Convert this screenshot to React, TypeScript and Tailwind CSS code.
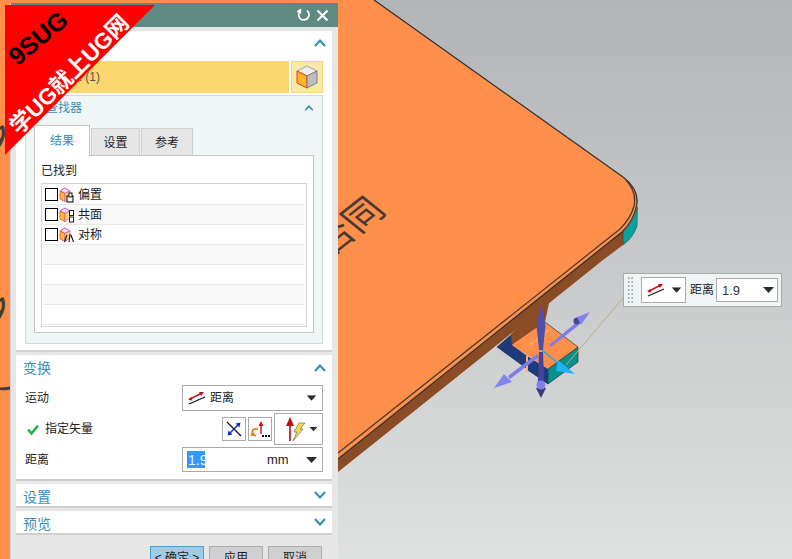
import React from "react";

const Chevron = ({ up = true, className = "" }: { up?: boolean; className?: string }) => (
  <svg width="12" height="8" viewBox="0 0 12 8" className={className}>
    <path d={up ? "M1 7 L6 1.5 L11 7" : "M1 1 L6 6.5 L11 1"} fill="none" stroke="#2f8cb8" strokeWidth="2" />
  </svg>
);

const Caret = ({ className = "" }: { className?: string }) => (
  <svg width="11" height="6" viewBox="0 0 11 6" className={className}>
    <path d="M0 0 H11 L5.5 6 Z" fill="#2b2b2b" />
  </svg>
);

const DistanceIcon = () => (
  <svg width="18" height="14" viewBox="0 0 18 14">
    <path d="M1 13 L17 6" stroke="#1a1a1a" strokeWidth="1.3" />
    <path d="M1 8.5 L13 2.5" stroke="#c8101a" strokeWidth="1.5" />
    <path d="M16 1 L11 1 L13 5 Z" fill="#c8101a" />
    <path d="M0.5 9 L4.5 9.5 L3 6 Z" fill="#c8101a" />
  </svg>
);

const Cube = () => (
  <svg width="22" height="24" viewBox="0 0 22 24">
    <path d="M11 1 L21 6 L11 11 L1 6 Z" fill="#eeeeee" stroke="#8d8d9a" strokeWidth="0.8" />
    <path d="M1 6 L11 11 V23 L1 18 Z" fill="#fdb52a" stroke="#e8361b" strokeWidth="1" />
    <path d="M11 11 L21 6 V18 L11 23 Z" fill="#bdbdbd" stroke="#6d6d6d" strokeWidth="0.8" />
  </svg>
);

const FaceIcon = ({ kind }: { kind: number }) => (
  <svg width="15" height="16" viewBox="0 0 15 16" className="ml-[1px] shrink-0">
    <path d="M1 4 L6 1 L11 4 L6 6.5 Z" fill="#f0dcf8" stroke="#b35bd6" strokeWidth="1" />
    <path d="M1 4 L6 6.5 V14.5 L1 12 Z" fill="#fdbb3a" stroke="#ec5a2a" strokeWidth="0.9" />
    <path d="M6 6.5 L11 4 V11 L6 14.5 Z" fill="#ffd76a" stroke="#c06ad8" strokeWidth="0.8" />
    {kind === 0 && (
      <>
        <rect x="8" y="9" width="6" height="6" fill="#fff" stroke="#111" strokeWidth="1.1" />
        <rect x="10" y="6" width="3" height="4" fill="#fff" stroke="#111" strokeWidth="1" />
      </>
    )}
    {kind === 1 && (
      <>
        <rect x="10.5" y="3.5" width="4" height="5" fill="#fff" stroke="#222" strokeWidth="1" />
        <rect x="10.5" y="10" width="4" height="5" fill="#fff" stroke="#222" strokeWidth="1" />
      </>
    )}
    {kind === 2 && (
      <path d="M5.5 15 L8 8 M10 15 L11 7 M14.5 15 L12 8" stroke="#111" strokeWidth="1.1" fill="none" />
    )}
  </svg>
);

const TabItem = ({ label, active, w }: { label: string; active?: boolean; w: string }) => (
  <div
    className={
      active
        ? `${w} h-[31px] bg-white border border-b-0 border-[#c4c4c4] text-[#3a8fb5] flex items-center justify-center relative z-10`
        : `${w} h-[28px] bg-[#e6e6e6] border border-b-0 border-[#d0d0d0] text-[#222] flex items-center justify-center`
    }
  >
    {label}
  </div>
);

const Row = ({ kind, label, alt }: { kind?: number; label?: string; alt?: boolean }) => (
  <div className={`h-[20px] border-b border-[#e8e8e8] flex items-center pl-[2px] ${alt ? "bg-[#f8f8f8]" : "bg-white"}`}>
    {label && (
      <>
        <div className="w-[13px] h-[13px] border-[1.5px] border-black bg-white shrink-0" />
        <FaceIcon kind={kind ?? 0} />
        <span className="ml-[4px] text-[#222]">{label}</span>
      </>
    )}
  </div>
);

const Collapsed = ({ label }: { label: string }) => (
  <div className="h-[24px] bg-white border-b-2 border-[#cfcfcf] flex items-center justify-between pl-[7px] pr-[6px]">
    <span className="text-[14px] text-[#3a8fb5] pt-[4px]">{label}</span>
    <Chevron up={false} />
  </div>
);

const Scene = () => (
  <svg viewBox="0 0 792 559" width="792" height="559" className="absolute inset-0">
    <path d="M0 740 L338 472 L603 260 L623 245 L623 225 L338 450 L0 700 Z" fill="#8a4b25" />
    <path d="M623 245 L623 232 Q634 222 637.5 207 L637 226 Q633 238 623 245 Z" fill="#05a3a0" stroke="#333" strokeWidth="0.5" />
    <path d="M374 0 L623 177 Q640 190 636.5 206 Q634 220 622 232 L338 459 L0 725 L0 0 Z" fill="#ff8f4a" />
    <path d="M374 0 L623 177 Q640 190 636.5 206 Q634 220 622 232 L338 459" fill="none" stroke="#333" strokeWidth="1.3" />
    <path d="M626 180 Q637 192 634 206 Q631 218 620 229 L338 453" fill="none" stroke="#4a3a32" strokeWidth="1.3" />

    <g fontFamily="'Noto Sans CJK SC', sans-serif" fill="#453a34" fontWeight="400">
      <text transform="matrix(0.8 -0.63 0.8 0.64 330 257)" fontSize="36">合同</text>
      <text transform="matrix(0.8 -0.63 0.8 0.64 -14 157)" fontSize="38">多</text>
      <text transform="matrix(0.8 -0.63 0.8 0.64 -14 329)" fontSize="38">多</text>
      <text transform="matrix(0.8 -0.63 0.8 0.64 -18 409)" fontSize="38">人</text>
    </g>

    {/* tab block */}
    <path d="M511 334 L512 345 L545 322 L550 298 Z" fill="#8a4b25" />
    <path d="M497 347 L511 335 L512 345 L548 372 V384 Z" fill="#1f3a7c" stroke="#222" strokeWidth="0.5" />
    <path d="M548 369 L578 347 V362 L548 384 Z" fill="#07908c" stroke="#222" strokeWidth="0.6" />
    <path d="M512 345 L545 322 L578 347 L548 369 Z" fill="#ff8f4a" />
    <path d="M545 322 L578 347 L548 369" fill="none" stroke="#333" strokeWidth="0.7" />
    <path d="M527 356 L548 369 V384 L527 370 Z" fill="#1f3a7c" />
    <path d="M527 356 V372" stroke="#ffb060" strokeWidth="2" />
    <path d="M530 345 L549 330" stroke="#ffae55" strokeWidth="1.5" />

    {/* leader */}
    <path d="M566 365 L623 298" stroke="#b9ae82" strokeWidth="1" />

    {/* handles */}
    <path d="M541 304 L545.5 325 L543 350 L539 350 L536.5 325 Z" fill="#4f4fa8" />
    <path d="M539 352 L543 352 L544.5 390 L537.5 390 Z" fill="#44449a" />
    <path d="M536 388 H546 L541 398 Z" fill="#3a3a70" />
    <circle cx="541" cy="385" r="4.5" fill="#8080f0" />
    <path d="M549 345 L577 322 L579 325 L551 347 Z" fill="#7d7de8" />
    <circle cx="577" cy="321" r="3.5" fill="#45458f" />
    <path d="M590 312 L577 317 L581 325 Z" fill="#8484ee" />
    <path d="M537 354 L508 376 L510 379 L539 357 Z" fill="#7d7de8" />
    <path d="M494 388 L504 374 L512 382 Z" fill="#8484ee" />
    <path d="M542 350 L561 366" stroke="#18a8f0" strokeWidth="1.5" />
    <path d="M575 374 L558 360 L556 371 Z" fill="#1fb2f6" />
  </svg>
);

export default function App() {
  return (
    <div className="relative w-[792px] h-[559px] overflow-hidden bg-linear-to-b from-[#b3b4b6] to-[#dfe0e0] text-[12px] leading-none font-['Liberation_Sans','Noto_Sans_CJK_SC',sans-serif]">
      <Scene />

      {/* dialog */}
      <div className="absolute left-[10px] top-[3px] w-[328px] h-[600px] flex flex-col bg-[#e6e6e6] border-l border-[#cfcfcf]">
        <div className="h-[24px] shrink-0 bg-[#5f8a82] flex items-center justify-end gap-[5px] pr-[9px]">
          <svg width="14" height="14" viewBox="0 0 14 14">
            <path d="M10 2.6 A5.2 5.2 0 1 1 3.2 3" fill="none" stroke="#fff" strokeWidth="1.7" />
            <path d="M6.4 0.6 V6 L1.6 3.4 Z" fill="#fff" transform="translate(-2.2 0)" />
          </svg>
          <svg width="13" height="13" viewBox="0 0 13 13">
            <path d="M1.5 1.5 L11.5 11.5 M11.5 1.5 L1.5 11.5" stroke="#fff" strokeWidth="2" />
          </svg>
        </div>

        <div className="flex flex-col gap-[3px] pl-[5px] pr-[6px] pt-[4px]">
          {/* object panel */}
          <div className="h-[321px] bg-white border-b-2 border-[#cfcfcf] flex flex-col">
            <div className="h-[30px] shrink-0 flex items-center justify-between pl-[7px] pr-[6px] pb-[6px]">
              <span className="text-[14px] text-[#3a8fb5]">对象</span>
              <Chevron />
            </div>
            <div className="h-[32px] shrink-0 flex gap-[2px] mx-[9px]">
              <div className="flex-1 bg-[#fcd670] flex items-center pl-[9px] text-[#555]">选择对象 (1)</div>
              <div className="w-[32px] bg-[#f9e9a9] border border-[#fcd77a] flex items-center justify-center">
                <Cube />
              </div>
            </div>
            <div className="mt-[2px] mx-[9px] h-[249px] bg-[#f0f5f5] border border-[#d3dada] flex flex-col">
              <div className="h-[29px] shrink-0 flex items-center justify-between pl-[20px] pr-[7px] pb-[5px]">
                <span className="text-[#3a8fb5]">查找器</span>
                <Chevron className="scale-75" />
              </div>
              <div className="flex items-end ml-[8px] h-[31px] shrink-0 gap-[1px]">
                <TabItem label="结果" active w="w-[56px]" />
                <TabItem label="设置" w="w-[49px]" />
                <TabItem label="参考" w="w-[52px]" />
              </div>
              <div className="-mt-px mx-[8px] h-[178px] bg-white border border-[#c4c4c4] px-[6px]">
                <div className="h-[27px] flex items-center pt-[3px] text-[#222]">已找到</div>
                <div className="border border-[#d5d5d5] p-px">
                  <Row kind={0} label="偏置" />
                  <Row kind={1} label="共面" alt />
                  <Row kind={2} label="对称" />
                  <Row alt />
                  <Row />
                  <Row alt />
                  <Row />
                </div>
              </div>
            </div>
          </div>

          {/* transform panel */}
          <div className="h-[126px] bg-white border-b-2 border-[#cfcfcf] flex flex-col px-[9px]">
            <div className="h-[30px] shrink-0 flex items-center justify-between -ml-[2px] -mr-[3px] pb-[4px]">
              <span className="text-[14px] text-[#3a8fb5]">变换</span>
              <Chevron />
            </div>
            <div className="h-[26px] shrink-0 flex items-center justify-between">
              <span className="text-[#222]">运动</span>
              <div className="w-[141px] h-[26px] border border-[#a9a9a9] flex items-center pl-[5px] pr-[5px]">
                <DistanceIcon />
                <span className="ml-[4px] text-[#222]">距离</span>
                <Caret className="ml-auto scale-90" />
              </div>
            </div>
            <div className="h-[32px] mt-[2px] shrink-0 flex items-center justify-between">
              <div className="flex items-center ml-[2px] gap-[6px]">
                <svg width="12" height="11" viewBox="0 0 12 11">
                  <path d="M1 5.5 L4.5 9.5 L11 1.5" fill="none" stroke="#22b14c" strokeWidth="2.6" />
                </svg>
                <span className="text-[#222]">指定矢量</span>
              </div>
              <div className="flex items-center gap-[2px]">
                <div className="w-[24px] h-[24px] border border-[#a9a9a9] flex items-center justify-center">
                  <svg width="18" height="18" viewBox="0 0 18 18">
                    <path d="M2 2 L16 16" stroke="#111" strokeWidth="1.2" />
                    <path d="M5 13 L13 5" stroke="#1530c8" strokeWidth="1.6" />
                    <path d="M15.5 2.5 L10.5 3.5 L14.5 7.5 Z M2.5 15.5 L7.5 14.5 L3.5 10.5 Z" fill="#1530c8" />
                  </svg>
                </div>
                <div className="w-[24px] h-[24px] border border-[#a9a9a9] flex items-center justify-center">
                  <svg width="20" height="18" viewBox="0 0 20 18">
                    <path d="M11 14 V5" stroke="#c8101a" strokeWidth="1.4" />
                    <path d="M11 1 L8.5 6 H13.5 Z" fill="#c8101a" />
                    <path d="M8 9 C1 8 1 14 6 16" fill="none" stroke="#ef7d1a" strokeWidth="1.8" />
                    <path d="M2 11 L6 16 L0.5 16 Z" fill="#ef7d1a" />
                    <path d="M12 15 h2 v2 h-2 Z M15 15 h2 v2 h-2 Z M18 15 h2 v2 h-2 Z" fill="#111" />
                  </svg>
                </div>
                <div className="w-[49px] h-[32px] border border-[#a9a9a9] flex items-center pl-[9px] pr-[3px]">
                  <svg width="22" height="26" viewBox="0 0 22 26">
                    <path d="M6 9 V25" stroke="#a50f15" strokeWidth="1.6" />
                    <path d="M6 1 L2 10 H10 Z" fill="#c00d14" />
                    <path d="M15 7 L21 7 L16 13 L19 13 L9 25 L13 16 L10 16 Z" fill="#f5d94a" stroke="#7d7d6d" strokeWidth="0.8" />
                  </svg>
                  <Caret className="ml-auto scale-75" />
                </div>
              </div>
            </div>
            <div className="h-[25px] mt-[2px] shrink-0 flex items-center justify-between">
              <span className="text-[#222]">距离</span>
              <div className="w-[141px] h-[25px] border border-[#a9a9a9] flex items-center pl-[4px] pr-[5px]">
                <span className="w-[18px] h-[17px] bg-[#3399ff] border-l border-[#d46a1a] text-[#e8f0ff] text-[14px] flex items-center">1.9</span>
                <span className="ml-[62px] text-[13px] text-[#222]">mm</span>
                <Caret className="ml-auto" />
              </div>
            </div>
          </div>

          <Collapsed label="设置" />
          <Collapsed label="预览" />

          <div className="mt-[8px] flex justify-end gap-[5px] pr-[10px]">
            <div className="w-[54px] h-[24px] bg-[#9ecbe6] border border-[#4a9fd4] flex items-center justify-center text-[#222]">&lt; 确定 &gt;</div>
            <div className="w-[54px] h-[24px] bg-[#d0d0d2] border border-[#adadad] flex items-center justify-center text-[#222]">应用</div>
            <div className="w-[54px] h-[24px] bg-[#d0d0d2] border border-[#adadad] flex items-center justify-center text-[#222]">取消</div>
          </div>
        </div>
      </div>

      {/* floating toolbar */}
      <div className="absolute left-[623px] top-[273px] w-[159px] h-[34px] bg-[#eff5f5] border border-[#ababab] flex items-center">
        <div className="ml-[3px] w-[7px] h-[28px] bg-[radial-gradient(#b4b4b4_1.2px,transparent_1.3px)] bg-size-[3.5px_4px]" />
        <div className="ml-[7px] w-[45px] h-[26px] bg-white border border-[#ababab] flex items-center pl-[5px] pr-[3px]">
          <DistanceIcon />
          <Caret className="ml-auto scale-90" />
        </div>
        <span className="ml-[4px] text-[#222]">距离</span>
        <div className="ml-[2px] w-[62px] h-[24px] bg-white border border-[#ababab] flex items-center pl-[5px] pr-[3px] text-[13px] text-[#333]">
          1.9
          <Caret className="ml-auto" />
        </div>
      </div>

      {/* corner ribbon */}
      <div className="absolute left-[5px] top-[5px] w-[150px] h-[150px] bg-[#ff0000] [clip-path:polygon(0_0,100%_0,0_100%)]">
        <span className="absolute left-[33px] top-[33px] -translate-x-1/2 -translate-y-1/2 -rotate-[40deg] whitespace-nowrap text-[25px] font-bold text-black">9SUG</span>
        <span className="absolute left-[65px] top-[70px] -translate-x-1/2 -translate-y-1/2 -rotate-45 whitespace-nowrap text-[22.5px] font-bold text-white">学UG就上UG网</span>
      </div>
    </div>
  );
}
